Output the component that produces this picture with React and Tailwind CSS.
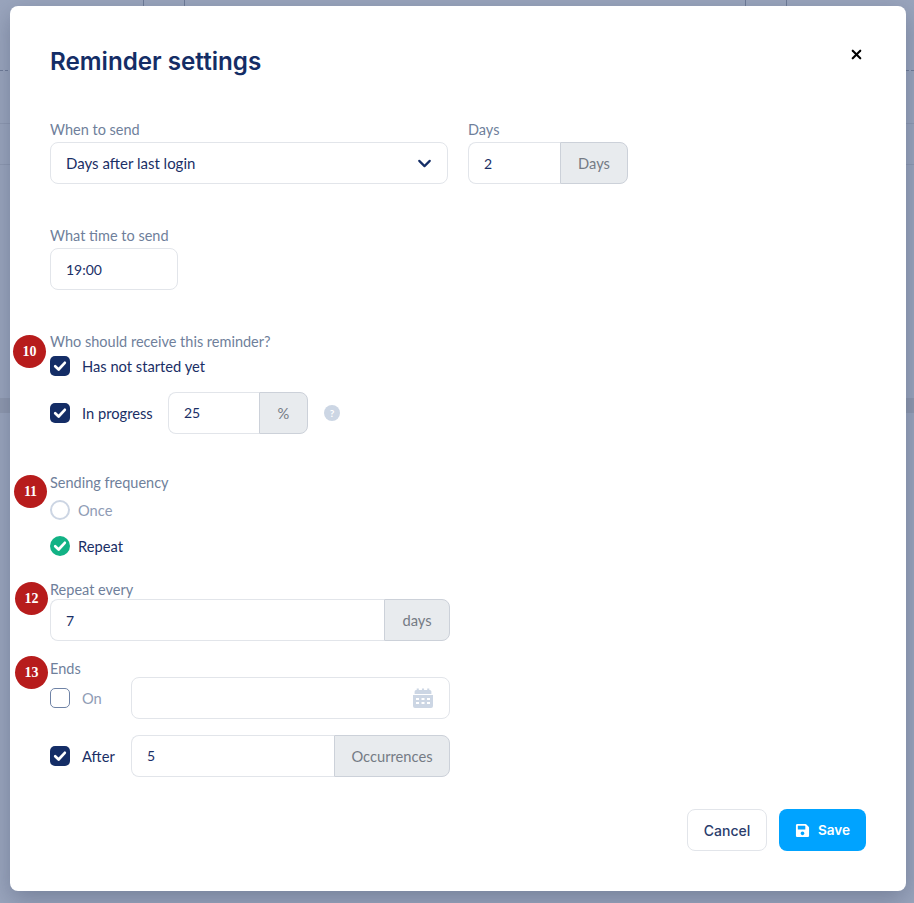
import React from 'react';
import { ChevronDown, X } from 'lucide-react';
import { FaSave } from 'react-icons/fa';

const BODY = "font-['Lato',sans-serif]";

const Label = ({ children }) => (
    <div className="text-[14.5px] leading-[17px] text-[#6f7f9b]">{children}</div>
);

const Tick = ({ size = 20 }) => (
    <svg width={size} height={size} viewBox="0 0 20 20" fill="none" stroke="currentColor" strokeWidth="2.7" strokeLinecap="round" strokeLinejoin="round">
        <path d="M5.200 10.300L8.600 13.500L14.800 6.800" />
    </svg>
);

const AddonInput = ({ value, addon, className, addonClass }) => (
    <div className={`flex h-[42px] ${className}`}>
        <div className="flex flex-1 items-center rounded-l-lg border border-r-0 border-[#e2e5ea] bg-white pl-[15px] text-[14px] text-[#1a2f66]">
            {value}
        </div>
        <div className={`flex items-center justify-center rounded-r-lg border border-[#ccd1d9] bg-[#e8ebee] text-[14.7px] text-[#757b85] ${addonClass}`}>
            {addon}
        </div>
    </div>
);

const CheckBox = ({ checked }) => (
    checked ? (
        <span className="flex h-5 w-5 shrink-0 items-center justify-center rounded-[5px] bg-[#142d66] text-white">
            <Tick />
        </span>
    ) : (
        <span className="h-5 w-5 shrink-0 rounded-[5px] border border-[#6f83a6] bg-white" />
    )
);

const Badge = ({ n, className }) => (
    <div className={`absolute flex h-[33px] w-[33px] items-center justify-center rounded-full bg-[#b71c1c] font-['Liberation_Serif',serif] text-[14px] font-bold text-white ${className}`}>
        {n}
    </div>
);

export default function App() {
    return (
        <div className={`relative h-[903px] w-[914px] overflow-hidden bg-[#9aa5bd] ${BODY}`}>
            {/* table behind the modal */}
            <div className="absolute left-0 top-[398px] h-[15px] w-full bg-[#8f99af]" />
            <div className="absolute left-0 top-[70px] w-full border-t border-dashed border-[#6f7c98]" />
            <div className="absolute left-0 top-[123px] w-full border-t border-[#8e99b1]" />
            <div className="absolute left-0 top-[164px] w-full border-t border-[#8e99b1]" />
            <div className="absolute left-[143px] top-0 h-[6px] border-l border-dashed border-[#6f7c98]" />
            <div className="absolute left-[184px] top-0 h-[6px] border-l border-dashed border-[#6f7c98]" />
            <div className="absolute left-[745px] top-0 h-[6px] border-l border-dashed border-[#6f7c98]" />
            <div className="absolute left-[786px] top-0 h-[6px] border-l border-dashed border-[#6f7c98]" />

            <div className="relative ml-[10px] mt-[6px] h-[885px] w-[896px] rounded-lg bg-white px-10 pt-10 shadow-[0_8px_24px_rgba(50,60,90,0.35)]">
                <div className="flex items-start justify-between">
                    <h1 className="font-['Inter',sans-serif] text-[24.2px] font-semibold leading-[32px] text-[#142d66]">Reminder settings</h1>
                    <X size={15} strokeWidth={3.5} className="mr-[2px] mt-[1px] text-black" />
                </div>

                <div className="mt-[43px] flex gap-5">
                    <div className="flex w-[398px] flex-col gap-[4px]">
                        <Label>When to send</Label>
                        <div className="flex h-[42px] items-center justify-between rounded-lg border border-[#e2e5ea] pl-[15px] pr-[12px] text-[15px] text-[#1a2f66]">
                            Days after last login
                            <ChevronDown size={21} strokeWidth={2.5} className="text-[#142d66]" />
                        </div>
                    </div>
                    <div className="flex flex-col gap-[4px]">
                        <Label>Days</Label>
                        <AddonInput value="2" addon="Days" className="w-[160px]" addonClass="w-[68px]" />
                    </div>
                </div>

                <div className="mt-[43px] flex flex-col gap-[4px]">
                    <Label>What time to send</Label>
                    <div className="flex h-[42px] w-[128px] items-center rounded-lg border border-[#e2e5ea] pl-[15px] text-[14px] text-[#1a2f66]">19:00</div>
                </div>

                <div className="mt-[43px]">
                    <Label>Who should receive this reminder?</Label>
                    <div className="mt-[6px] flex items-center gap-3 text-[14.7px] leading-5 text-[#1a2f66]">
                        <CheckBox checked />
                        Has not started yet
                    </div>
                    <div className="mt-[16px] flex items-center gap-3 text-[14.7px] leading-5 text-[#1a2f66]">
                        <CheckBox checked />
                        <span className="w-[74px]">In progress</span>
                        <AddonInput value="25" addon="%" className="w-[140px]" addonClass="w-[49px]" />
                        <span className="ml-1 flex h-4 w-4 items-center justify-center rounded-full bg-[#ccd6e4] text-[10px] font-bold text-white">?</span>
                    </div>
                </div>

                <div className="mt-[40px]">
                    <Label>Sending frequency</Label>
                    <div className="mt-[9px] flex items-center gap-2 text-[14.7px] leading-5 text-[#8f9cb5]">
                        <span className="h-5 w-5 rounded-full border-2 border-[#ccd5e3]" />
                        Once
                    </div>
                    <div className="mt-[16px] flex items-center gap-2 text-[14.7px] leading-5 text-[#1a2f66]">
                        <span className="flex h-5 w-5 items-center justify-center rounded-full bg-[#12b285] text-white">
                            <Tick />
                        </span>
                        Repeat
                    </div>
                </div>

                <div className="mt-[25px]">
                    <Label>Repeat every</Label>
                    <AddonInput value="7" addon="days" className="mt-px w-[400px]" addonClass="w-[66px]" />
                </div>

                <div className="mt-[19px] w-[400px]">
                    <Label>Ends</Label>
                    <div className="flex items-center text-[14.7px] leading-5 text-[#8f9cb5]">
                        <CheckBox />
                        <span className="ml-3 w-[49px]">On</span>
                        <div className="flex h-[42px] flex-1 items-center justify-end rounded-lg border border-[#e2e5ea] pr-4">
                            <svg width="20" height="20" viewBox="0 0 20 20" fill="#ccd6e4">
                                <path d="M2 3.500A1.500 1.500 0 0 1 3.500 2H4V.5h2V2h3V.5h2V2h3V.5h2V2h.5A1.500 1.500 0 0 1 18 3.500V6H2z" transform="translate(-.5 0) scale(1.05 1)" />
                                <path fillRule="evenodd" d="M0 7h20v11a2 2 0 0 1-2 2H2a2 2 0 0 1-2-2zm3 3v2h3v-2zm5.500 0v2h3v-2zm5.500 0v2h3v-2zM3 14v2h3v-2zm5.500 0v2h3v-2zm5.500 0v2h3v-2z" />
                            </svg>
                        </div>
                    </div>
                    <div className="mt-[16px] flex items-center text-[14.7px] leading-5 text-[#1a2f66]">
                        <CheckBox checked />
                        <span className="ml-3 w-[49px]">After</span>
                        <AddonInput value="5" addon="Occurrences" className="flex-1" addonClass="w-[116px]" />
                    </div>
                </div>

                <div className="mt-[32px] flex justify-end gap-3">
                    <button className="h-[42px] w-20 rounded-lg border border-[#e2e5ea] bg-white font-['Inter',sans-serif] text-[14px] font-medium text-[#2a3c6c]">Cancel</button>
                    <button className="flex h-[42px] w-[87px] items-center justify-center gap-2 rounded-lg bg-[#00a3ff] font-['Inter',sans-serif] text-[13.6px] font-semibold text-white">
                        <FaSave size={15} />
                        <span>Save</span>
                    </button>
                </div>

                <Badge n="10" className="left-[3px] top-[329px]" />
                <Badge n="11" className="left-[4px] top-[469px]" />
                <Badge n="12" className="left-[5px] top-[576px]" />
                <Badge n="13" className="left-[5px] top-[650px]" />
            </div>
        </div>
    );
}
